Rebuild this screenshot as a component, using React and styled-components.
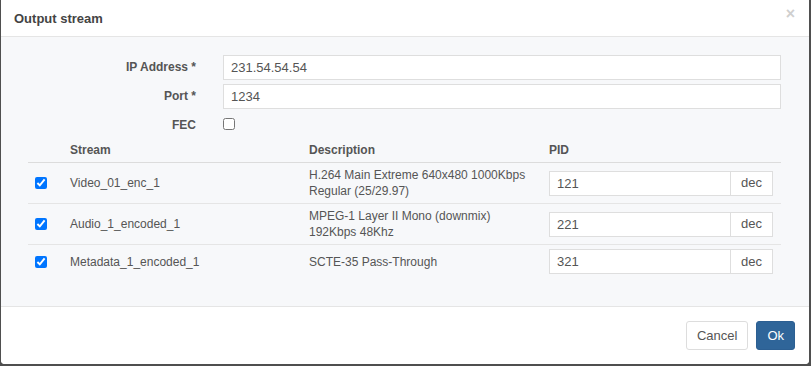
import React from "react";
import styled, { createGlobalStyle } from "styled-components";

const GlobalStyle = createGlobalStyle`
  html, body {
    margin: 0;
    background: #4f4f4f;
    font-family: "Liberation Sans", Arial, sans-serif;
  }
`;

const streams = [
  { name: "Video_01_enc_1", desc: ["H.264 Main Extreme 640x480 1000Kbps", "Regular (25/29.97)"], pid: "121" },
  { name: "Audio_1_encoded_1", desc: ["MPEG-1 Layer II Mono (downmix)", "192Kbps 48Khz"], pid: "221" },
  { name: "Metadata_1_encoded_1", desc: ["SCTE-35 Pass-Through"], pid: "321" },
];

function App() {
  return (
    <>
      <GlobalStyle />
      <Modal>
        <Header>
          <Title>Output stream</Title>
          <Close>×</Close>
        </Header>

        <Body>
          <Form>
            <Label>IP Address *</Label>
            <TextInput defaultValue="231.54.54.54" />
            <Label>Port *</Label>
            <TextInput defaultValue="1234" />
            <Label>FEC</Label>
            <CheckCell>
              <Check type="checkbox" />
            </CheckCell>
          </Form>

          <Table>
            <HeadRow>
              <span />
              <span>Stream</span>
              <span>Description</span>
              <span>PID</span>
            </HeadRow>
            {streams.map((s) => (
              <Row key={s.name}>
                <RowCheck type="checkbox" defaultChecked />
                <span>{s.name}</span>
                <Desc>
                  {s.desc.map((line) => (
                    <div key={line}>{line}</div>
                  ))}
                </Desc>
                <PidGroup>
                  <PidInput defaultValue={s.pid} />
                  <Addon>dec</Addon>
                </PidGroup>
              </Row>
            ))}
          </Table>
        </Body>

        <Footer>
          <Button>Cancel</Button>
          <Button $primary>Ok</Button>
        </Footer>
      </Modal>
    </>
  );
}

export default App;

const Modal = styled.div`
  width: 808px;
  height: 364px;
  margin-left: 1px;
  background: #fff;
  border-radius: 0 0 4px 4px;
  display: flex;
  flex-direction: column;
  overflow: hidden;
`;

const Header = styled.div`
  height: 36px;
  flex-shrink: 0;
  display: flex;
  align-items: center;
  justify-content: space-between;
  padding: 0 14px 0 13px;
  border-bottom: 1px solid #e5e5e5;
`;

const Title = styled.div`
  font-size: 13px;
  font-weight: bold;
  color: #444;
`;

const Close = styled.div`
  font-size: 16px;
  font-weight: bold;
  color: #cfcfcf;
  line-height: 1;
  margin-top: -8px;
`;

const Body = styled.div`
  flex: 1;
  background: #f7f8fa;
  padding: 18px 28px 0 27px;
`;

const Form = styled.div`
  display: grid;
  grid-template-columns: 168px 1fr;
  column-gap: 27px;
  row-gap: 4px;
`;

const Label = styled.div`
  text-align: right;
  font-size: 12px;
  font-weight: bold;
  color: #555;
  line-height: 25px;
`;

const TextInput = styled.input`
  height: 25px;
  box-sizing: border-box;
  border: 1px solid #dedede;
  padding: 0 7px;
  font: 13px "Liberation Sans", Arial, sans-serif;
  color: #555;
  background: #fff;
  outline: none;
`;

const CheckCell = styled.div`
  height: 25px;
`;

const Check = styled.input`
  width: 12px;
  height: 12px;
  margin: 5px 0 0 0;
`;

const Table = styled.div`
  display: flex;
  flex-direction: column;
`;

const HeadRow = styled.div`
  display: grid;
  grid-template-columns: 42px 239px 240px minmax(0, 1fr);
  padding: 4px 8px 4px 0;
  border-bottom: 1px solid #dcdcdc;
  font-size: 12px;
  font-weight: bold;
  line-height: 16px;
  color: #555;
`;

const Row = styled.div`
  display: grid;
  grid-template-columns: 42px 239px 240px minmax(0, 1fr);
  align-items: center;
  padding: 4px 8px 4px 0;
  font-size: 12px;
  line-height: 16px;
  color: #555;
  border-bottom: 1px solid #e5e5e5;

  &:last-child {
    border-bottom: 0;
  }
`;

const RowCheck = styled.input`
  width: 12px;
  height: 12px;
  margin: 0 0 0 7px;
`;

const Desc = styled.div``;

const PidGroup = styled.div`
  display: flex;
  height: 25px;
  min-width: 0;
`;

const PidInput = styled(TextInput)`
  flex: 1;
  width: 0;
  min-width: 0;
`;

const Addon = styled.div`
  width: 42px;
  flex-shrink: 0;
  box-sizing: border-box;
  border: 1px solid #dedede;
  border-left: 0;
  background: #fff;
  font-size: 13px;
  color: #555;
  display: flex;
  align-items: center;
  justify-content: center;
`;

const Footer = styled.div`
  height: 57px;
  flex-shrink: 0;
  border-top: 1px solid #e5e5e5;
  background: #fff;
  display: flex;
  align-items: center;
  justify-content: flex-end;
  gap: 8px;
  padding: 0 14px;
`;

const Button = styled.button`
  height: 29px;
  padding: 0 10px;
  border-radius: 3px;
  font: 13px "Liberation Sans", Arial, sans-serif;
  border: 1px solid ${(p) => (p.$primary ? "#2c5f92" : "#ddd")};
  background: ${(p) => (p.$primary ? "#2f6599" : "#fff")};
  color: ${(p) => (p.$primary ? "#fff" : "#555")};
`;
